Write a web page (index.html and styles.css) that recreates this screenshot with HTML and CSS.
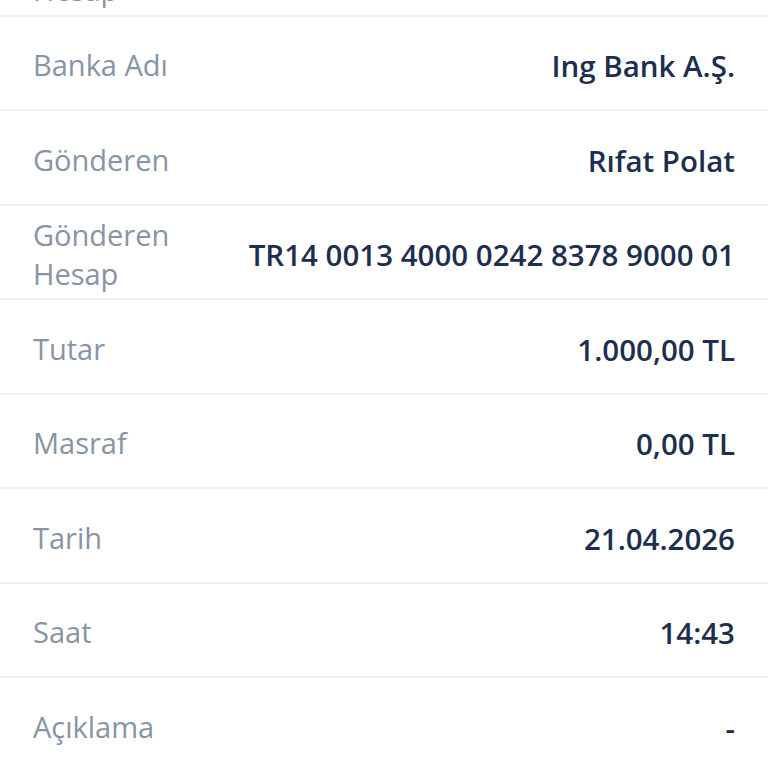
FILE: index.html
```html
<!DOCTYPE html>
<html lang="tr">
<head>
  <meta charset="UTF-8">
  <title>Dekont Detayı</title>
  <link rel="stylesheet" href="styles.css">
</head>
<body>

  <main class="detay">
    <!-- önceki satır, ekranın üstünden taşıyor -->
    <div class="satir">
      <span class="etiket">Gönderilen Hesap</span>
      <span class="deger">TR56 0006 2000 1230 0006 2981 45</span>
    </div>
    <div class="satir">
      <span class="etiket">Banka Adı</span>
      <span class="deger">Ing Bank A.Ş.</span>
    </div>
    <div class="satir">
      <span class="etiket">Gönderen</span>
      <span class="deger">Rıfat Polat</span>
    </div>
    <div class="satir">
      <span class="etiket">Gönderen Hesap</span>
      <span class="deger">TR14 0013 4000 0242 8378 9000 01</span>
    </div>
    <div class="satir">
      <span class="etiket">Tutar</span>
      <span class="deger">1.000,00 TL</span>
    </div>
    <div class="satir">
      <span class="etiket">Masraf</span>
      <span class="deger">0,00 TL</span>
    </div>
    <div class="satir">
      <span class="etiket">Tarih</span>
      <span class="deger">21.04.2026</span>
    </div>
    <div class="satir">
      <span class="etiket">Saat</span>
      <span class="deger">14:43</span>
    </div>
    <div class="satir">
      <span class="etiket">Açıklama</span>
      <span class="deger">-</span>
    </div>
  </main>

</body>
</html>
```

FILE: styles.css
```css
body {
  font-family: "Open Sans", Arial, sans-serif;
  background: #fff;
  margin: 0;
  padding: 0;
  overflow: hidden;
}
.detay {
  margin-top: -78px;
}
.satir {
  display: flex;
  align-items: center;
  justify-content: space-between;
  gap: 24px;
  height: 86.5px;
  padding: 6px 33px 0;
  border-bottom: 2px solid #eef0f3;
}
.etiket {
  font-size: 29px;
  line-height: 1.33;
  color: #8794a5;
}
.deger {
  font-size: 29.5px;
  font-weight: 600;
  color: #1d2f4d;
  text-align: right;
  white-space: nowrap;
}
```
